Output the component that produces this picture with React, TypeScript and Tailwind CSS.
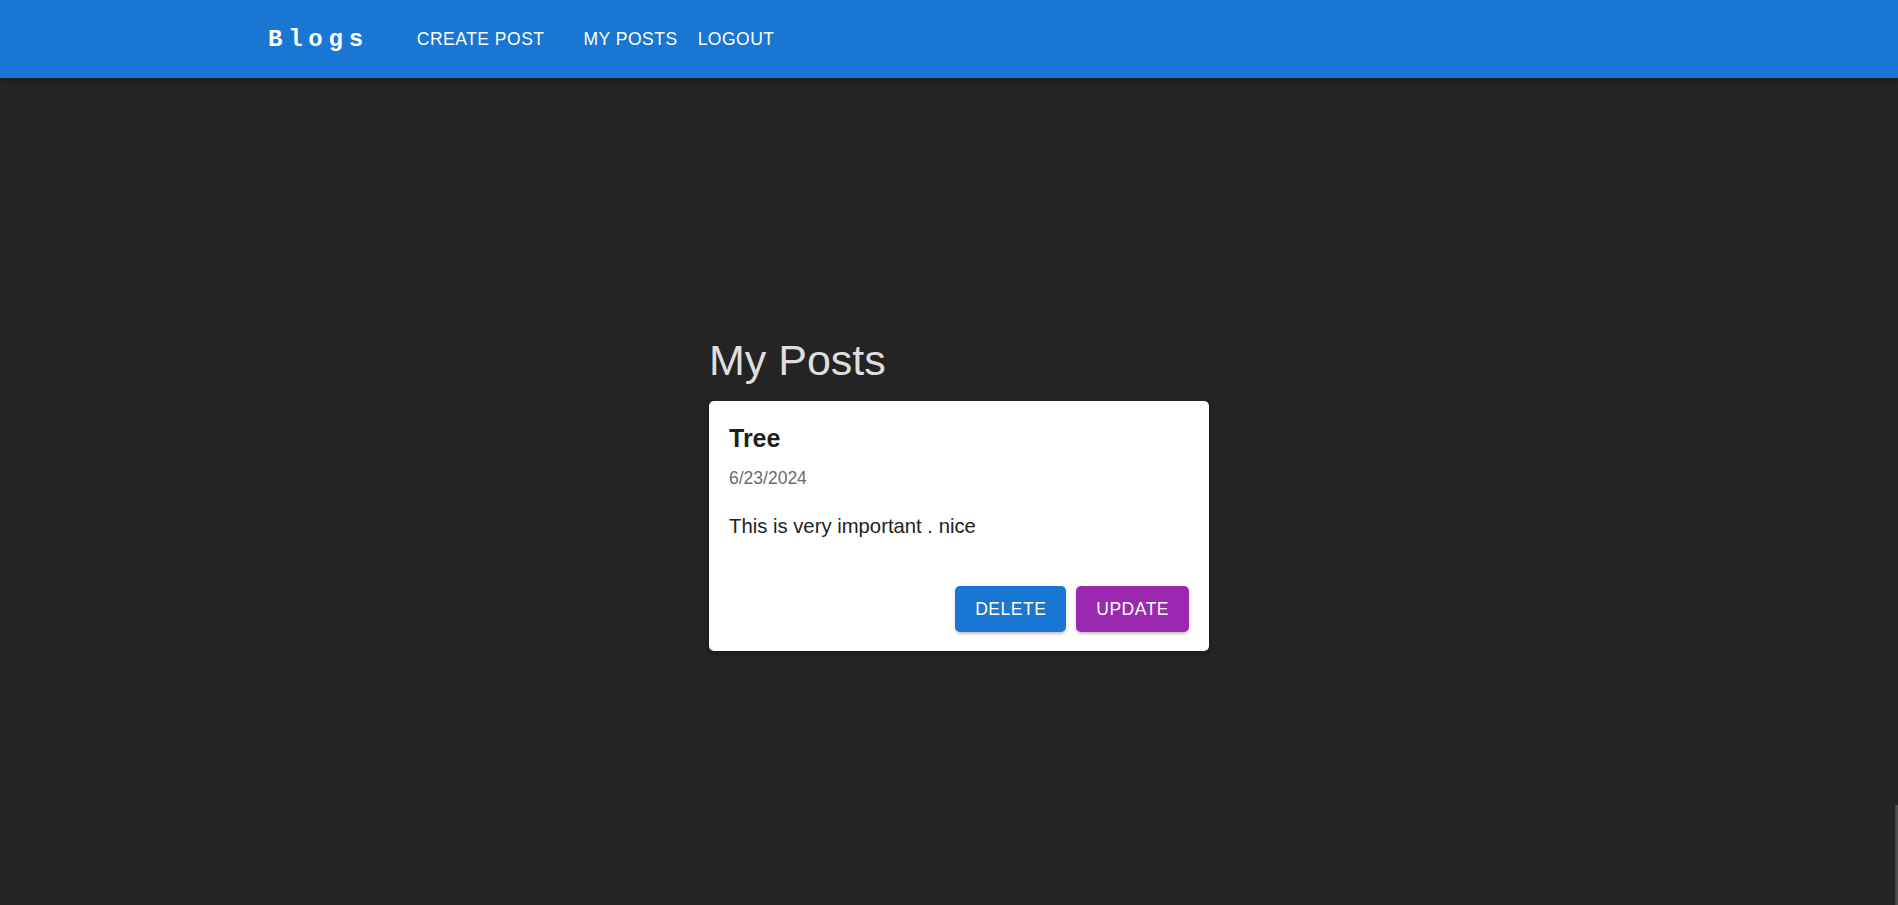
import React from "react";

export default function App() {
  return (
    <div
      className="relative min-h-[905px] flex flex-col bg-[#242424]"
      style={{ fontFamily: '"Liberation Sans", Arial, sans-serif' }}
    >
      <nav className="h-[78px] bg-[#1976d2] flex items-center pl-[268px] pt-[2px] shadow-[0_2px_5px_rgba(0,0,0,0.3)]">
        <span
          className="text-white font-bold text-[24px] tracking-[5.76px] leading-none"
          style={{ fontFamily: '"Liberation Mono", "Courier New", monospace' }}
        >
          Blogs
        </span>
        <span className="ml-[48px] text-white text-[17.5px] tracking-[0.5px] leading-none">CREATE POST</span>
        <span className="ml-[39px] text-white text-[17.5px] tracking-[0.5px] leading-none">MY POSTS</span>
        <span className="ml-[20px] text-white text-[17.5px] tracking-[0.5px] leading-none">LOGOUT</span>
      </nav>

      <main className="flex-1 flex justify-center pl-[20px] pt-[256px]">
        <div className="w-[500px] flex flex-col">
          <h1 className="text-[43px] leading-[52px] text-[#dedede] font-normal">My Posts</h1>
          <div className="mt-[15px] bg-white rounded-[5px] pt-[20px] px-[20px] pb-[19px] shadow-[0_2px_4px_rgba(0,0,0,0.3)] flex flex-col">
            <h2 className="text-[25px] leading-[35px] font-bold text-[#1f1f1f]">Tree</h2>
            <p className="mt-[10px] text-[17.5px] leading-[24px] text-[#6b6b6b]">6/23/2024</p>
            <p className="mt-[21px] text-[20.3px] leading-[30px] text-[#222222]">This is very important . nice</p>
            <div className="mt-[45px] flex justify-end gap-[10px]">
              <button className="h-[45.5px] px-[20px] rounded-[5px] bg-[#1976d2] text-white text-[17.5px] tracking-[0.5px] shadow-[0_3px_3px_-2px_rgba(0,0,0,0.2),0_2px_4px_0_rgba(0,0,0,0.14)]">
                DELETE
              </button>
              <button className="h-[45.5px] px-[20px] rounded-[5px] bg-[#9c27b0] text-white text-[17.5px] tracking-[0.5px] shadow-[0_3px_3px_-2px_rgba(0,0,0,0.2),0_2px_4px_0_rgba(0,0,0,0.14)]">
                UPDATE
              </button>
            </div>
          </div>
        </div>
      </main>

      <div className="absolute right-0 bottom-0 w-[3px] h-[100px] bg-gradient-to-r from-[#3a3a3a] to-[#5a5a5a]" />
    </div>
  );
}
